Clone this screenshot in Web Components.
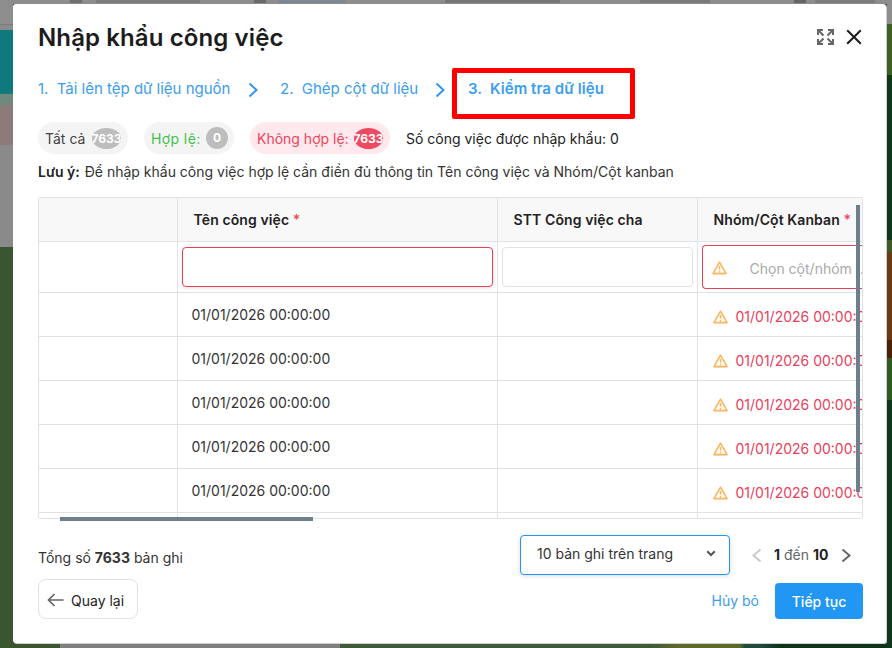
<!DOCTYPE html>
<html lang="vi">
<head>
<meta charset="utf-8">
<title>Nhập khẩu công việc</title>
<style>
    html, body { margin: 0; padding: 0; }
    body { font-family: Inter, "Liberation Sans", sans-serif; font-size: 14px; color: #222; }
</style>
</head>
<body>
<app-backdrop>
    <import-dialog></import-dialog>
</app-backdrop>

<script>
const WARN_ICON = `<svg width="15" height="14" viewBox="0 0 15 14" fill="none"><path d="M7.5 1.2 L14 12.6 H1 Z" stroke="#ffb45c" stroke-width="1.6" stroke-linejoin="round"/><path d="M7.5 5 V8.6" stroke="#ffb45c" stroke-width="1.6"/><circle cx="7.5" cy="10.5" r=".9" fill="#ffb45c"/></svg>`;

const chevron = (w, h, color, dir, sw) => {
    const d = dir === 'left' ? `M${w - 1.5} 1.5 L1.5 ${h / 2} L${w - 1.5} ${h - 1.5}` : `M1.5 1.5 L${w - 1.5} ${h / 2} L1.5 ${h - 1.5}`;
    return `<svg width="${w}" height="${h}" viewBox="0 0 ${w} ${h}" fill="none"><path d="${d}" stroke="${color}" stroke-width="${sw}"/></svg>`;
};

class AppBackdrop extends HTMLElement {
    constructor() {
        super();
        this.attachShadow({ mode: 'open' }).innerHTML = `
            <style>
                :host {
                    display: block;
                    position: relative;
                    width: 892px;
                    height: 648px;
                    overflow: hidden;
                    background:
                        linear-gradient(90deg, transparent 0 70px, #6f6f6f 70px 82px, transparent 82px 96px, #7c7c7c 96px 200px, transparent 200px 254px, #6a6a6a 254px 266px, transparent 266px 278px, #7d8794 278px 345px, transparent 345px 445px, #777 445px 560px, transparent 560px 640px, #7a7a7a 640px 710px, transparent 710px 794px, #666 794px 806px, transparent 806px 815px, #7c7c7c 815px 875px, transparent 875px) left top / 100% 3px no-repeat,
                        linear-gradient(#8d8d8d 0 24px, #7d7d7d 24px 25px, #8b8b8b 25px 30px, #10797d 30px 94px, #6f8a7c 94px 105px, #8d7a7a 105px 145px, #8a8a8a 145px 247px, transparent 247px) left top / 13px 100% no-repeat,
                        linear-gradient(#8d8d8d 0 24px, #3e6120 24px 75px, #0f3818 75px 240px, #3f5a2a 240px 252px, #6b3a12 252px 340px, #4a2008 340px 358px, #2f5a20 358px 400px, #0f3818 400px) right top / 5px 100% no-repeat,
                        linear-gradient(90deg, #3a5530 0 60px, #7f7f7f 60px 340px, #3f5a38 340px 650px, #5f6a28 680px 740px, #1f4a40 745px 760px, #0e3318 780px) left bottom / 100% 5px no-repeat,
                        linear-gradient(#8d8d8d, #8d8d8d) left top / 100% 4px no-repeat,
                        #3a5530;
                }
            </style>
            <slot></slot>`;
    }
}

class ImportDialog extends HTMLElement {
    constructor() {
        super();
        this.attachShadow({ mode: 'open' }).innerHTML = `
            <style>
                :host {
                    display: flex;
                    flex-direction: column;
                    position: absolute;
                    left: 13px;
                    top: 4px;
                    width: 873px;
                    height: 639px;
                    box-sizing: border-box;
                    padding: 14px 23px 0 25px;
                    background: #fff;
                    border-radius: 3px;
                    box-shadow: 1px 1px 0 #cfcfcf;
                    color: #222;
                }
                .head { display: flex; align-items: center; height: 38px; }
                h1 { flex: 1; margin: 0; font-size: 24px; font-weight: 600; color: #1c1c1c; letter-spacing: .11px; }
                .tools { display: flex; align-items: center; gap: 12px; margin-right: 1px; }
                .tools svg { display: block; }
                step-nav { margin-top: 21px; }
                .counts { display: flex; align-items: center; gap: 16px; margin-top: 21px; height: 32px; }
                .imported { font-size: 14px; color: #222; }
                .note { margin-top: 8px; height: 20px; line-height: 20px; font-size: 14px; color: #333; }
                .note b { font-weight: 600; color: #222; margin-right: 1px; }
                import-table { margin-top: 15px; }
                .paging { display: flex; align-items: center; margin-top: 16px; height: 40px; }
                .total { flex: 1; padding-top: 4px; color: #333; }
                .total b { font-weight: 700; }
                .actions { display: flex; align-items: flex-end; margin-top: 4px; height: 40px; }
                .grow { flex: 1; }
                .cancel { margin-right: 16px; height: 36px; line-height: 36px; color: #3b9df0; }
            </style>
            <div class="head">
                <h1>Nhập khẩu công việc</h1>
                <div class="tools">
                    <svg width="17" height="16" viewBox="0 0 17 16" fill="none" stroke="#666" stroke-width="2">
                        <path d="M1 6 V1 H6 M1.5 1.5 L6.5 6.5" /><path d="M11 1 H16 V6 M15.5 1.5 L10.5 6.5" />
                        <path d="M1 10 V15 H6 M1.5 14.5 L6.5 9.5" /><path d="M11 15 H16 V10 M15.5 14.5 L10.5 9.5" />
                    </svg>
                    <svg width="16" height="16" viewBox="0 0 16 16" fill="none" stroke="#1c1c1c" stroke-width="2"><path d="M1.2 1.2 L14.8 14.8 M14.8 1.2 L1.2 14.8"/></svg>
                </div>
            </div>
            <step-nav></step-nav>
            <div class="counts">
                <count-pill tone="plain" count="7633" w="90">Tất cả</count-pill>
                <count-pill tone="ok" count="0" w="90">Hợp lệ:</count-pill>
                <count-pill tone="bad" count="7633" w="140">Không hợp lệ:</count-pill>
                <span class="imported">Số công việc được nhập khẩu: 0</span>
            </div>
            <div class="note"><b>Lưu ý:</b> Để nhập khẩu công việc hợp lệ cần điền đủ thông tin Tên công việc và Nhóm/Cột kanban</div>
            <import-table></import-table>
            <div class="paging">
                <div class="total">Tổng số <b>7633</b> bản ghi</div>
                <page-select></page-select>
                <page-nav></page-nav>
            </div>
            <div class="actions">
                <back-button>Quay lại</back-button>
                <div class="grow"></div>
                <div class="cancel">Hủy bỏ</div>
                <primary-button>Tiếp tục</primary-button>
            </div>`;
    }
}

class StepNav extends HTMLElement {
    constructor() {
        super();
        const arrow = chevron(10, 16, '#2f97ee', 'right', 2);
        this.attachShadow({ mode: 'open' }).innerHTML = `
            <style>
                :host {
                    display: flex; align-items: center; height: 24px; box-sizing: border-box; padding-bottom: 2px;
                    color: #3b9df0; font-size: 15px; white-space: nowrap; position: relative;
                }
                .num { margin-right: 4px; }
                .one { width: 210px; }
                .two { width: 155px; margin-left: 22px; }
                svg { display: block; margin-top: 4px; }
                .three { margin-left: 23px; font-weight: 600; letter-spacing: .06px; }
                .mark {
                    position: absolute; left: 414px; top: -9px;
                    width: 183px; height: 51px; box-sizing: border-box;
                    border: 5px solid #ff0000; border-radius: 2px;
                }
            </style>
            <span class="one"><span class="num">1.</span> Tải lên tệp dữ liệu nguồn</span>${arrow}
            <span class="two"><span class="num">2.</span> Ghép cột dữ liệu</span>${arrow}
            <span class="three"><span class="num">3.</span> Kiểm tra dữ liệu</span>
            <div class="mark"></div>`;
    }
}

class CountPill extends HTMLElement {
    constructor() {
        super();
        const tone = this.getAttribute('tone');
        const count = this.getAttribute('count');
        const wide = count.length > 1;
        const colors = {
            plain: ['#f4f4f4', '#444', '#bdbdbd'],
            ok: ['#f4f4f4', '#43c14b', '#bdbdbd'],
            bad: ['#ffe9ec', '#ec4660', '#ee4a62'],
        }[tone];
        this.attachShadow({ mode: 'open' }).innerHTML = `
            <style>
                :host {
                    display: flex; align-items: center; justify-content: space-between;
                    width: ${this.getAttribute('w')}px; height: 32px; box-sizing: border-box;
                    padding: 0 ${wide ? 7 : 6}px 0 7px; border-radius: 16px;
                    background: ${colors[0]}; color: ${colors[1]}; font-size: 14px; white-space: nowrap;
                }
                .label { letter-spacing: ${tone === 'ok' ? '.4px' : '0'}; }
                .badge {
                    width: ${wide ? 29 : 22}px; height: ${wide ? 21 : 22}px; line-height: ${wide ? 21 : 22}px;
                    border-radius: 50%; overflow: hidden; background: ${colors[2]};
                    color: #fff; font-size: 12px; font-weight: 700; display: flex; justify-content: center;
                }
            </style>
            <span class="label"><slot></slot></span><span class="badge">${count}</span>`;
    }
}

class ImportTable extends HTMLElement {
    constructor() {
        super();
        const row = `
            <tr class="data">
                <td></td>
                <td class="date">01/01/2026 00:00:00</td>
                <td></td>
                <td class="err"><span class="wrap">${WARN_ICON}<span>01/01/2026 00:00:00</span></span></td>
            </tr>`;
        this.attachShadow({ mode: 'open' }).innerHTML = `
            <style>
                :host {
                    display: block; position: relative; height: 322px; width: 825px;
                    box-sizing: border-box; border: 1px solid #e2e2e2; border-radius: 2px;
                    font-size: 14px; color: #333;
                }
                .clip { height: 100%; overflow: hidden; }
                table { border-collapse: collapse; table-layout: fixed; width: 880px; }
                col.c1 { width: 138px; } col.c2 { width: 320px; } col.c3 { width: 200px; } col.c4 { width: 222px; }
                th, td { border: 1px solid #e2e2e2; padding: 0; box-sizing: border-box; white-space: nowrap; overflow: hidden; }
                tr > :first-child { border-left: 0; }
                thead tr:first-child th { border-top: 0; }
                th { height: 43px; background: #f8f8f8; text-align: left; padding-left: 16px; font-weight: 600; color: #222; letter-spacing: .1px; }
                th i { font-style: normal; color: #ee4a62; }
                th:first-child { padding: 0; }
                .filters td { height: 51px; padding: 0; }
                .field { height: 40px; margin: 0 4px; box-sizing: border-box; background: #fff; border: 1px solid #e2e2e2; border-radius: 4px; }
                .field.bad { border-color: #e8405a; box-shadow: 0 1px 4px rgba(0,0,0,.12); }
                .pick { display: flex; align-items: center; height: 44px; margin: 0 0 0 4px; box-sizing: border-box; border: 1px solid #e8405a; border-right: 0; border-radius: 4px 0 0 4px; padding: 3px 0 0 9px; color: #a9a9a9; overflow: hidden; }
                .pick svg { flex: none; margin-right: 23px; margin-top: -1px; }
                .data td { height: 44px; }
                .date { padding-left: 14px; padding-top: 1px; }
                .err { color: #e8405a; }
                .wrap { display: flex; align-items: center; padding: 5px 0 0 15px; }
                .wrap svg { flex: none; margin-right: 8px; }
                .vthumb { position: absolute; left: 817px; top: 7px; width: 4px; height: 287px; background: #6c7f8b; }
                .hthumb { position: absolute; left: 21px; top: 319px; width: 253px; height: 4px; background: #6c7f8b; }
            </style>
            <div class="clip">
            <table>
                <colgroup><col class="c1"><col class="c2"><col class="c3"><col class="c4"></colgroup>
                <thead>
                    <tr><th></th><th>Tên công việc <i>*</i></th><th>STT Công việc cha</th><th>Nhóm/Cột Kanban <i>*</i></th></tr>
                    <tr class="filters">
                        <td></td>
                        <td><div class="field bad"></div></td>
                        <td><div class="field"></div></td>
                        <td><div class="pick">${WARN_ICON}<span>Chọn cột/nhóm ...</span></div></td>
                    </tr>
                </thead>
                <tbody>${row.repeat(5)}<tr class="data"><td></td><td></td><td></td><td></td></tr></tbody>
            </table>
            </div>
            <div class="vthumb"></div>
            <div class="hthumb"></div>`;
    }
}

class PageSelect extends HTMLElement {
    constructor() {
        super();
        this.attachShadow({ mode: 'open' }).innerHTML = `
            <style>
                :host {
                    display: flex; align-items: center; width: 210px; height: 40px; box-sizing: border-box;
                    padding: 0 13px 3px 16px; border: 1px solid #2196f3; border-radius: 4px;
                    box-shadow: 0 1px 4px rgba(0,0,0,.15); background: #fff; color: #333; font-size: 14px;
                }
                span { flex: 1; }
                svg { display: block; }
            </style>
            <span>10 bản ghi trên trang</span>
            <svg width="10" height="7" viewBox="0 0 10 7" fill="none"><path d="M1.2 1.2 L5 5 L8.8 1.2" stroke="#555" stroke-width="2"/></svg>`;
    }
}

class PageNav extends HTMLElement {
    constructor() {
        super();
        this.attachShadow({ mode: 'open' }).innerHTML = `
            <style>
                :host { display: flex; align-items: center; width: 133px; box-sizing: border-box; padding: 0 0 2px 22px; font-size: 14px; color: #666; }
                b { color: #222; font-weight: 700; }
                .txt { margin: 0 13px 0 12px; white-space: nowrap; }
                svg { display: block; flex: none; margin-top: 2px; }
            </style>
            ${chevron(10, 15, '#c9c9c9', 'left', 2)}
            <span class="txt"><b>1</b> đến <b>10</b></span>
            ${chevron(10, 15, '#666', 'right', 2)}`;
    }
}

class BackButton extends HTMLElement {
    constructor() {
        super();
        this.attachShadow({ mode: 'open' }).innerHTML = `
            <style>
                :host {
                    display: flex; align-items: center; gap: 7px; width: 100px; height: 40px; box-sizing: border-box;
                    padding: 2px 0 0 8px; border: 1px solid #e2e2e2; border-radius: 8px; color: #222; font-size: 14px;
                }
                svg { display: block; }
            </style>
            <svg width="17" height="14" viewBox="0 0 17 14" fill="none" stroke="#666" stroke-width="1.7"><path d="M16.5 7 H1.5 M7.5 1 L1.5 7 L7.5 13"/></svg>
            <slot></slot>`;
    }
}

class PrimaryButton extends HTMLElement {
    constructor() {
        super();
        this.attachShadow({ mode: 'open' }).innerHTML = `
            <style>
                :host {
                    display: flex; align-items: center; justify-content: center; width: 88px; height: 36px;
                    background: #2196f3; border-radius: 4px; color: #fff; font-size: 14px; font-weight: 500;
                }
            </style>
            <slot></slot>`;
    }
}

customElements.define('app-backdrop', AppBackdrop);
customElements.define('step-nav', StepNav);
customElements.define('count-pill', CountPill);
customElements.define('import-table', ImportTable);
customElements.define('page-select', PageSelect);
customElements.define('page-nav', PageNav);
customElements.define('back-button', BackButton);
customElements.define('primary-button', PrimaryButton);
customElements.define('import-dialog', ImportDialog);
</script>
</body>
</html>
